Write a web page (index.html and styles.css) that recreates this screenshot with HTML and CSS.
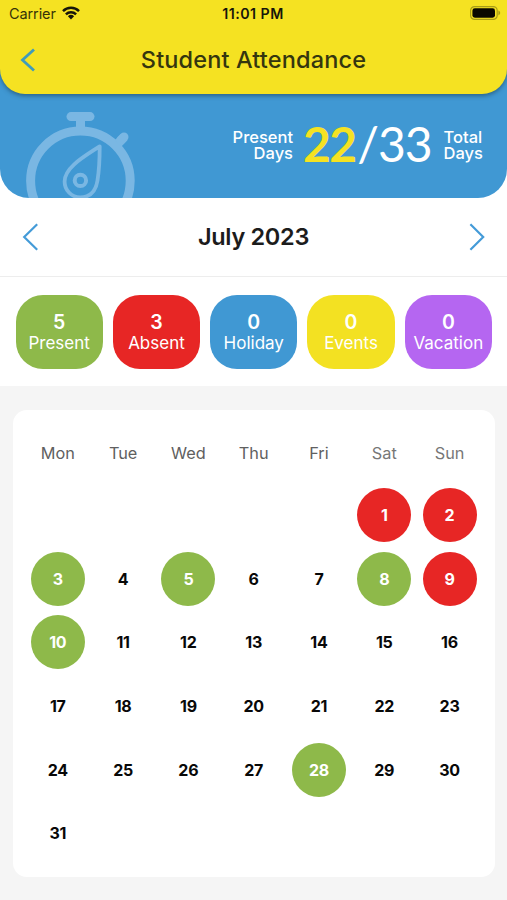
FILE: index.html
```html
<!DOCTYPE html>
<html lang="en">
<head>
<meta charset="utf-8">
<title>Student Attendance</title>
<link rel="stylesheet" href="styles.css">
</head>
<body>
<div class="hero">
  <header class="header">
    <div class="status">
      <div class="status-left"><span class="carrier">Carrier</span>
        <svg class="wifi" width="18" height="14" viewBox="0 0 18 14"><g fill="none" stroke="#17160a" stroke-width="2.5"><path d="M1 5.1a11.4 11.4 0 0 1 16 0"/><path d="M3.9 8.3a7.3 7.3 0 0 1 10.2 0"/></g><path d="M5.9 10.3a4.5 4.5 0 0 1 6.2 0L9 13.6z" fill="#17160a"/></svg>
      </div>
      <div class="time">11:01 PM</div>
      <svg class="battery" width="31" height="14" viewBox="0 0 31 14"><rect x=".6" y=".6" width="26.6" height="12.8" rx="4" fill="none" stroke="#a79d16" stroke-width="1.2"/><rect x="2.4" y="2.3" width="22.6" height="9.4" rx="2.4" fill="#090800"/><path d="M28.4 4.6c2.4 1 2.4 3.8 0 4.8z" fill="#a79d16"/></svg>
    </div>
    <div class="title-row">
      <svg class="back" width="15" height="24" viewBox="0 0 15 24"><path d="M14 1.5 2.5 12 14 22.5" fill="none" stroke="#3f9bbb" stroke-width="2.8"/></svg>
      <h1>Student Attendance</h1>
    </div>
  </header>
  <div class="summary">
    <svg class="watch" width="110" height="86" viewBox="25 112 110 86"><g fill="none" stroke="#7ab7e3"><circle cx="80.4" cy="180.8" r="49.8" stroke-width="9"/><path d="M71 116.6h19" stroke-width="9" stroke-linecap="round"/><path d="M80.5 117v12" stroke-width="9"/><path d="m118 143.5 6.2-6.4" stroke-width="9"/><path d="M121 140l3-3" stroke-width="9" stroke-linecap="round"/><path d="M99.7 146.3C86 155.5 64.6 167 64.6 181.5c0 9 7 15.8 15.6 15.8 9.8 0 15.500-5.800 17.300-16.800 1.700-10.500 2.200-22 2.200-34.200z" stroke-width="3.8" stroke-linejoin="round"/><circle cx="80.4" cy="180.4" r="5.7" stroke-width="4"/></g></svg>
    <div class="label present-label">Present<br>Days</div>
    <div class="score"><b>22</b><span class="slash">/</span><span class="total">33</span></div>
    <div class="label total-label">Total<br>Days</div>
  </div>
</div>
<div class="month">
  <svg width="16" height="28" viewBox="0 0 16 28"><path d="M15.2 1.2 2.2 14l13 12.8" fill="none" stroke="#449bd8" stroke-width="2.2"/></svg>
  <h2>July 2023</h2>
  <svg width="16" height="28" viewBox="0 0 16 28"><path d="M1.4 1.2 14.2 14 1.4 26.8" fill="none" stroke="#449bd8" stroke-width="2.2"/></svg>
</div>
<div class="stats">
  <div class="pill green"><b>5</b><span>Present</span></div>
  <div class="pill red"><b>3</b><span>Absent</span></div>
  <div class="pill blue"><b>0</b><span>Holiday</span></div>
  <div class="pill yellow"><b>0</b><span>Events</span></div>
  <div class="pill purple"><b>0</b><span>Vacation</span></div>
</div>
<main class="calendar">
  <div class="weekdays"><span>Mon</span><span>Tue</span><span>Wed</span><span>Thu</span><span>Fri</span><span class="weekend">Sat</span><span class="weekend">Sun</span></div>
  <div class="days">
    <span class="day first red">1</span><span class="day red">2</span>
    <span class="day green">3</span><span class="day">4</span><span class="day green">5</span><span class="day">6</span><span class="day">7</span><span class="day green">8</span><span class="day red">9</span>
    <span class="day green">10</span><span class="day">11</span><span class="day">12</span><span class="day">13</span><span class="day">14</span><span class="day">15</span><span class="day">16</span>
    <span class="day">17</span><span class="day">18</span><span class="day">19</span><span class="day">20</span><span class="day">21</span><span class="day">22</span><span class="day">23</span>
    <span class="day">24</span><span class="day">25</span><span class="day">26</span><span class="day">27</span><span class="day green">28</span><span class="day">29</span><span class="day">30</span>
    <span class="day">31</span>
  </div>
</main>
</body>
</html>
```
FILE: styles.css
```css
* { box-sizing: border-box; }
body { margin: 0; background: #f5f5f5; font-family: Inter, "Liberation Sans", sans-serif; height: 900px; overflow: hidden; }
svg { display: block; flex: none; }
h1, h2 { margin: 0; white-space: nowrap; }
.green { background: #8eb94a; }
.red { background: #e72625; }
.blue { background: #4098d3; }
.yellow { background: #f3e122; }
.purple { background: #b566f1; }
.hero { height: 198px; background: #4098d3; border-radius: 0 0 29px 29px; }
.header { height: 94px; background: #f5e222; border-radius: 0 0 25px 25px; box-shadow: 0 2px 4px rgba(20, 50, 70, .5); }
/* keeps the area behind the hero's lower corners white */
body::before { content: ""; position: absolute; z-index: -1; top: 0; left: 0; width: 100%; height: 300px; background: #fff; }
.status { height: 28px; display: grid; grid-template-columns: 1fr auto 1fr; align-items: center; padding: 0 6px 0 9px; color: #17160a; }
.status-left { display: flex; align-items: center; gap: 6px; }
.carrier { font-size: 14.5px; letter-spacing: -.1px; margin-top: -1px; color: #353308; }
.wifi { margin-top: -2px; }
.time { font-size: 14.2px; font-weight: 600; letter-spacing: .5px; margin-top: -1px; transform: translateX(-2px); }
.battery { justify-self: end; margin-top: -2px; }
.title-row { height: 64px; display: grid; grid-template-columns: 15px 1fr 15px; align-items: center; padding: 0 20px; }
.title-row h1 { text-align: center; font-size: 23.5px; font-weight: 500; letter-spacing: .15px; margin-top: -2px; color: #34360f; }
.summary { height: 104px; display: flex; align-items: center; padding: 0 24px 0 25px; overflow: hidden; color: #fff; }
.watch { align-self: flex-end; margin-right: auto; }
.label { font-size: 16.5px; line-height: 16px; font-weight: 500; margin-top: -3px; white-space: nowrap; }
.present-label { text-align: right; }
.score { display: flex; align-items: center; margin: -4px 12px 0 10px; font-family: Lato, sans-serif; font-size: 48px; line-height: 50px; white-space: nowrap; }
.score b { color: #f5e222; letter-spacing: -1.5px; }
.slash { margin: 0 -1px 0 1.5px; }
.total { font-weight: 400; letter-spacing: -1px; }
.month { height: 79px; display: flex; align-items: center; justify-content: space-between; padding: 0 22px; background: #fff; border-bottom: 1px solid #ededed; }
.month h2 { font-size: 23.5px; font-weight: 600; letter-spacing: -.3px; margin-top: -1px; color: #1c1c1c; }
.stats { height: 109px; display: grid; grid-template-columns: repeat(5, 1fr); gap: 10px; padding: 18px 15px 17px 15.5px; background: #fff; }
.pill { border-radius: 27px; display: flex; flex-direction: column; align-items: center; justify-content: center; color: #fff; }
.pill b { font-size: 19.5px; line-height: 22px; font-weight: 600; }
.pill span { font-size: 17px; line-height: 21px; }
.calendar { margin: 24px 12px 0 13px; height: 467px; padding: 30px 12.8px 0 12.2px; background: #fff; border-radius: 14px; }
.weekdays { display: grid; grid-template-columns: repeat(7, 1fr); height: 43.4px; line-height: 27px; text-align: center; font-size: 16.3px; color: #606060; }
.weekend { color: #777; }
.days { display: grid; grid-template-columns: repeat(7, 1fr); grid-auto-rows: 63.6px; align-items: center; justify-items: center; }
.day { width: 54px; height: 54px; border-radius: 50%; display: flex; align-items: center; justify-content: center; font-size: 16px; font-weight: 700; letter-spacing: -.2px; color: #080808; }
.day.first { grid-column: 6; }
.day.red, .day.green { color: #fff; }
```
